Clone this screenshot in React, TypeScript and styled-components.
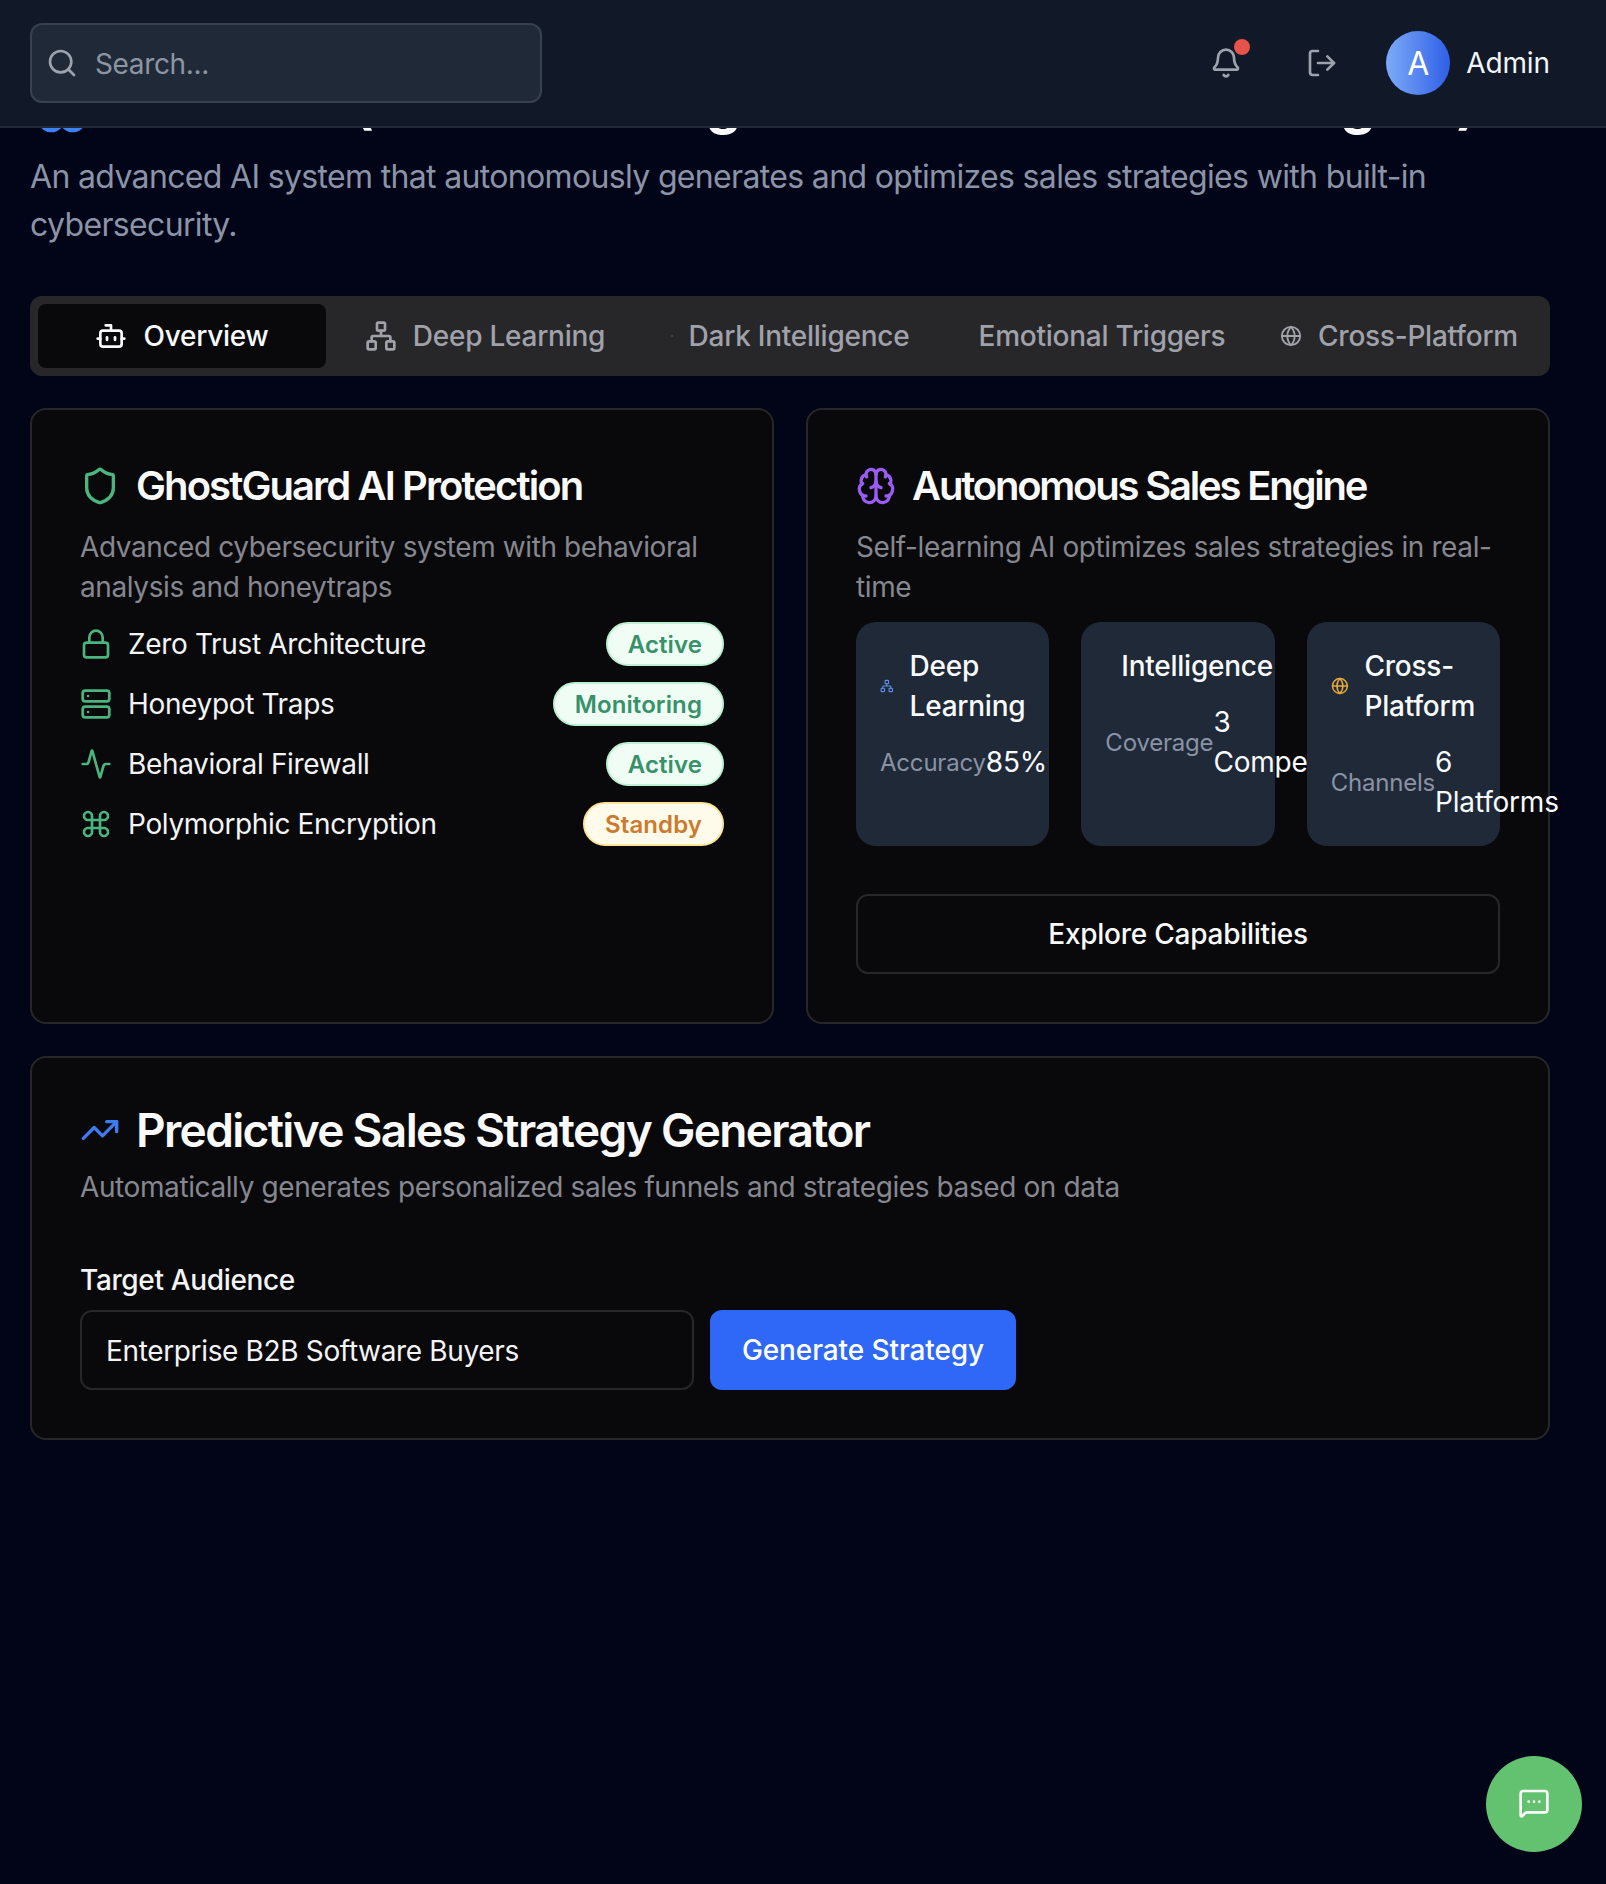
import React from 'react'
import styled, { createGlobalStyle } from 'styled-components'
import {
  Activity,
  Bell,
  Bot,
  Brain,
  Command,
  Eye,
  Globe,
  Lock,
  LogOut,
  MessageSquareMore,
  Network,
  Search,
  Server,
  Shield,
  TrendingUp,
  Zap,
} from 'lucide-react'

const GlobalStyle = createGlobalStyle`
  * { box-sizing: border-box; }
  html, body { margin: 0; padding: 0; background: #020417; }
  body { font-family: Inter, "Noto Sans", sans-serif; color: #f8fafc; letter-spacing: -0.35px; }
  button, input { letter-spacing: inherit; }
`

const Page = styled.div`
  position: relative;
  width: 1606px;
  height: 1884px;
  overflow: hidden;
  background: #020417;
`

const TopBar = styled.header`
  position: absolute;
  top: 0;
  left: 0;
  right: 0;
  z-index: 10;
  height: 128px;
  display: flex;
  align-items: center;
  justify-content: space-between;
  padding: 0 56px 0 30px;
  background: #111827;
  border-bottom: 2px solid #1f2937;
`

const SearchBox = styled.label`
  width: 512px;
  height: 80px;
  display: flex;
  align-items: center;
  gap: 17px;
  padding: 0 14px;
  background: #1f2937;
  border: 2px solid #374151;
  border-radius: 12px;
  color: #9ca3af;
`

const SearchInput = styled.input`
  flex: 1;
  min-width: 0;
  padding: 2px 0 0;
  border: 0;
  outline: 0;
  background: transparent;
  font: 400 28px/40px Inter, sans-serif;
  color: #f8fafc;
  &::placeholder {
    color: #8d95a5;
    opacity: 1;
  }
`

const TopActions = styled.div`
  display: flex;
  align-items: center;
`

const IconButton = styled.button`
  position: relative;
  width: 32px;
  height: 32px;
  margin-right: 64px;
  padding: 0;
  border: 0;
  background: none;
  color: #9ca3af;
`

const NotifyDot = styled.span`
  position: absolute;
  top: -8px;
  right: -8px;
  width: 16px;
  height: 16px;
  border-radius: 50%;
  background: #e5534b;
`

const Avatar = styled.div`
  width: 64px;
  height: 64px;
  margin-left: -16px;
  border-radius: 50%;
  display: flex;
  align-items: center;
  justify-content: center;
  background: linear-gradient(to right, #7dabf8, #2f5fe6);
  color: #fff;
  font-size: 32px;
  font-weight: 400;
`

const UserName = styled.span`
  margin-left: 16px;
  font-size: 28px;
  line-height: 40px;
  font-weight: 400;
  letter-spacing: -0.1px;
  color: #f1f5f9;
`

const Main = styled.main`
  display: flex;
  flex-direction: column;
  width: 1520px;
  margin-left: 30px;
  padding-top: 71px;
`

const PageTitle = styled.h1`
  margin: 0;
  display: flex;
  align-items: center;
  gap: 16px;
  color: #f8fafc;
  font-size: 56px;
  line-height: 64px;
  font-weight: 700;
  letter-spacing: -0.5px;
  white-space: nowrap;
  svg { flex: none; color: #3b82f6; }
`

const PageIntro = styled.p`
  margin: 18px 0 0;
  font-size: 32px;
  line-height: 48px;
  letter-spacing: -0.66px;
  color: #8b94a7;
`

const TabList = styled.div`
  margin-top: 47px;
  height: 80px;
  padding: 8px;
  display: grid;
  grid-template-columns: 288px 318px 292px 332px 262px;
  background: #27272a;
  border-radius: 12px;
`

const Tab = styled.button<{ $active?: boolean }>`
  display: flex;
  align-items: center;
  justify-content: center;
  gap: 16px;
  padding: 0;
  border: 0;
  border-radius: 8px;
  background: ${p => (p.$active ? '#09090b' : 'transparent')};
  color: ${p => (p.$active ? '#fafafa' : '#a1a1aa')};
  font: 500 28px/40px Inter, sans-serif;
  letter-spacing: -0.25px;
  white-space: nowrap;
`

const TwoCols = styled.div`
  margin-top: 32px;
  display: grid;
  grid-template-columns: 1fr 1fr;
  gap: 32px;
`

const Card = styled.section<{ $wide?: boolean }>`
  padding: 48px;
  background: #09090b;
  border: 2px solid #27272a;
  border-radius: 16px;
  ${p => p.$wide && 'margin-top: 32px;'}
`

const CardHead = styled.div`
  display: flex;
  align-items: center;
  gap: 16px;
  svg { flex: none; }
`

const CardTitle = styled.h3<{ $large?: boolean; $tracking: string }>`
  margin: 0;
  color: #fafafa;
  font-size: ${p => (p.$large ? '46px' : '40px')};
  line-height: ${p => (p.$large ? '48px' : '56px')};
  font-weight: 600;
  letter-spacing: ${p => p.$tracking};
`

const CardText = styled.p`
  margin: 13px 0 -1px;
  font-size: 28px;
  line-height: 40px;
  letter-spacing: -0.4px;
  color: #87878f;
`

const StatusList = styled.ul`
  list-style: none;
  margin: 16px 0 0;
  padding: 0;
  display: flex;
  flex-direction: column;
  gap: 16px;
`

const StatusRow = styled.li`
  display: flex;
  align-items: center;
  justify-content: space-between;
  height: 44px;
`

const StatusName = styled.span`
  display: flex;
  align-items: center;
  gap: 16px;
  font-size: 28px;
  line-height: 40px;
  letter-spacing: -0.35px;
  color: #f4f4f5;
  svg { color: #4bb57f; }
`

const Badge = styled.span<{ $tone: 'green' | 'amber' }>`
  padding: 0 20px;
  height: 44px;
  display: flex;
  align-items: center;
  border-radius: 22px;
  border: 2px solid ${p => (p.$tone === 'green' ? '#bbf0d0' : '#fde49a')};
  background: ${p => (p.$tone === 'green' ? '#effdf5' : '#fffbeb')};
  color: ${p => (p.$tone === 'green' ? '#38916a' : '#cc7a2e')};
  font-size: 24px;
  font-weight: 600;
  letter-spacing: 0.1px;
`

const TileGrid = styled.div`
  margin-top: 16px;
  display: grid;
  grid-template-columns: repeat(3, minmax(0, 1fr));
  gap: 32px;
`

const Tile = styled.div`
  padding: 24px;
  min-height: 224px;
  background: #1f2937;
  border-radius: 20px;
`

const TileHead = styled.div`
  display: flex;
  align-items: center;
  gap: 16px;
  font-size: 28px;
  line-height: 40px;
  font-weight: 500;
  letter-spacing: -0.25px;
  color: #f8fafc;
  svg { min-width: 0; }
`

const TileStat = styled.div`
  margin-top: 16px;
  display: flex;
  align-items: center;
  justify-content: space-between;
`

const TileLabel = styled.span`
  padding-top: 2px;
  font-size: 24px;
  line-height: 32px;
  letter-spacing: -0.2px;
  color: #8a93a5;
`

const TileValue = styled.span`
  font-size: 28px;
  line-height: 40px;
  font-weight: 400;
  letter-spacing: -0.2px;
  color: #f8fafc;
`

const OutlineButton = styled.button`
  width: 100%;
  height: 80px;
  margin-top: 48px;
  background: #09090b;
  border: 2px solid #27272a;
  border-radius: 12px;
  color: #fafafa;
  font: 500 28px/40px Inter, sans-serif;
  letter-spacing: -0.25px;
`

const FieldLabel = styled.div`
  margin-top: 54px;
  font-size: 28px;
  line-height: 40px;
  font-weight: 500;
  color: #f4f4f5;
`

const FieldRow = styled.div`
  margin-top: 10px;
  display: flex;
  gap: 16px;
`

const TextField = styled.input`
  width: 614px;
  height: 80px;
  padding: 2px 24px 0;
  background: #09090b;
  border: 2px solid #27272a;
  border-radius: 12px;
  outline: 0;
  color: #f4f4f5;
  font: 400 28px/40px Inter, sans-serif;
`

const PrimaryButton = styled.button`
  width: 306px;
  height: 80px;
  border: 0;
  border-radius: 12px;
  background: #2f68f7;
  color: #fff;
  font: 500 28px/40px Inter, sans-serif;
  letter-spacing: -0.1px;
`

const ChatFab = styled.button`
  position: absolute;
  right: 24px;
  bottom: 32px;
  width: 96px;
  height: 96px;
  padding: 0 0 2px;
  border: 0;
  border-radius: 50%;
  background: #63c270;
  color: #fff;
  display: flex;
  align-items: center;
  justify-content: center;
`

const statuses = [
  { name: 'Zero Trust Architecture', state: 'Active', tone: 'green', icon: Lock },
  { name: 'Honeypot Traps', state: 'Monitoring', tone: 'green', icon: Server },
  { name: 'Behavioral Firewall', state: 'Active', tone: 'green', icon: Activity },
  { name: 'Polymorphic Encryption', state: 'Standby', tone: 'amber', icon: Command },
] as const

export default function App() {
  return (
    <Page>
      <GlobalStyle />
      <TopBar>
        <SearchBox>
          <Search size={32} />
          <SearchInput placeholder="Search..." />
        </SearchBox>
        <TopActions>
          <IconButton>
            <Bell size={32} />
            <NotifyDot />
          </IconButton>
          <IconButton>
            <LogOut size={32} />
          </IconButton>
          <Avatar>A</Avatar>
          <UserName>Admin</UserName>
        </TopActions>
      </TopBar>

      <Main>
        <PageTitle>
          <Brain size={64} />
          Ghost AI (Self-Learning Autonomous Sales Engine)
        </PageTitle>
        <PageIntro>
          An advanced AI system that autonomously generates and optimizes sales strategies with built-in cybersecurity.
        </PageIntro>

        <TabList>
          <Tab $active><Bot size={32} />Overview</Tab>
          <Tab><Network size={32} />Deep Learning</Tab>
          <Tab><Eye size={2} />Dark Intelligence</Tab>
          <Tab>Emotional Triggers</Tab>
          <Tab><Globe size={22} />Cross-Platform</Tab>
        </TabList>

        <TwoCols>
          <Card>
            <CardHead>
              <Shield size={40} color="#4bb57f" />
              <CardTitle $tracking="-1.9px">GhostGuard AI Protection</CardTitle>
            </CardHead>
            <CardText>Advanced cybersecurity system with behavioral analysis and honeytraps</CardText>
            <StatusList>
              {statuses.map(s => (
                <StatusRow key={s.name}>
                  <StatusName><s.icon size={32} />{s.name}</StatusName>
                  <Badge $tone={s.tone}>{s.state}</Badge>
                </StatusRow>
              ))}
            </StatusList>
          </Card>

          <Card>
            <CardHead>
              <Brain size={40} color="#9b5cf6" />
              <CardTitle $tracking="-2.2px">Autonomous Sales Engine</CardTitle>
            </CardHead>
            <CardText>Self-learning AI optimizes sales strategies in real-time</CardText>
            <TileGrid>
              <Tile>
                <TileHead><Network size={32} color="#5f8fec" /><span>Deep Learning</span></TileHead>
                <TileStat><TileLabel>Accuracy</TileLabel><TileValue>85%</TileValue></TileStat>
              </Tile>
              <Tile>
                <TileHead><Zap size={32} color="#a78bfa" /><span>Intelligence</span></TileHead>
                <TileStat><TileLabel>Coverage</TileLabel><TileValue>3 Competitors</TileValue></TileStat>
              </Tile>
              <Tile>
                <TileHead><Globe size={32} color="#e8a93a" /><span>Cross-Platform</span></TileHead>
                <TileStat><TileLabel>Channels</TileLabel><TileValue>6 Platforms</TileValue></TileStat>
              </Tile>
            </TileGrid>
            <OutlineButton>Explore Capabilities</OutlineButton>
          </Card>
        </TwoCols>

        <Card $wide>
          <CardHead>
            <TrendingUp size={40} color="#3f7bf0" />
            <CardTitle $large $tracking="-1.66px">Predictive Sales Strategy Generator</CardTitle>
          </CardHead>
          <CardText>Automatically generates personalized sales funnels and strategies based on data</CardText>
          <FieldLabel>Target Audience</FieldLabel>
          <FieldRow>
            <TextField readOnly value="Enterprise B2B Software Buyers" />
            <PrimaryButton>Generate Strategy</PrimaryButton>
          </FieldRow>
        </Card>
      </Main>

      <ChatFab><MessageSquareMore size={32} /></ChatFab>
    </Page>
  )
}
